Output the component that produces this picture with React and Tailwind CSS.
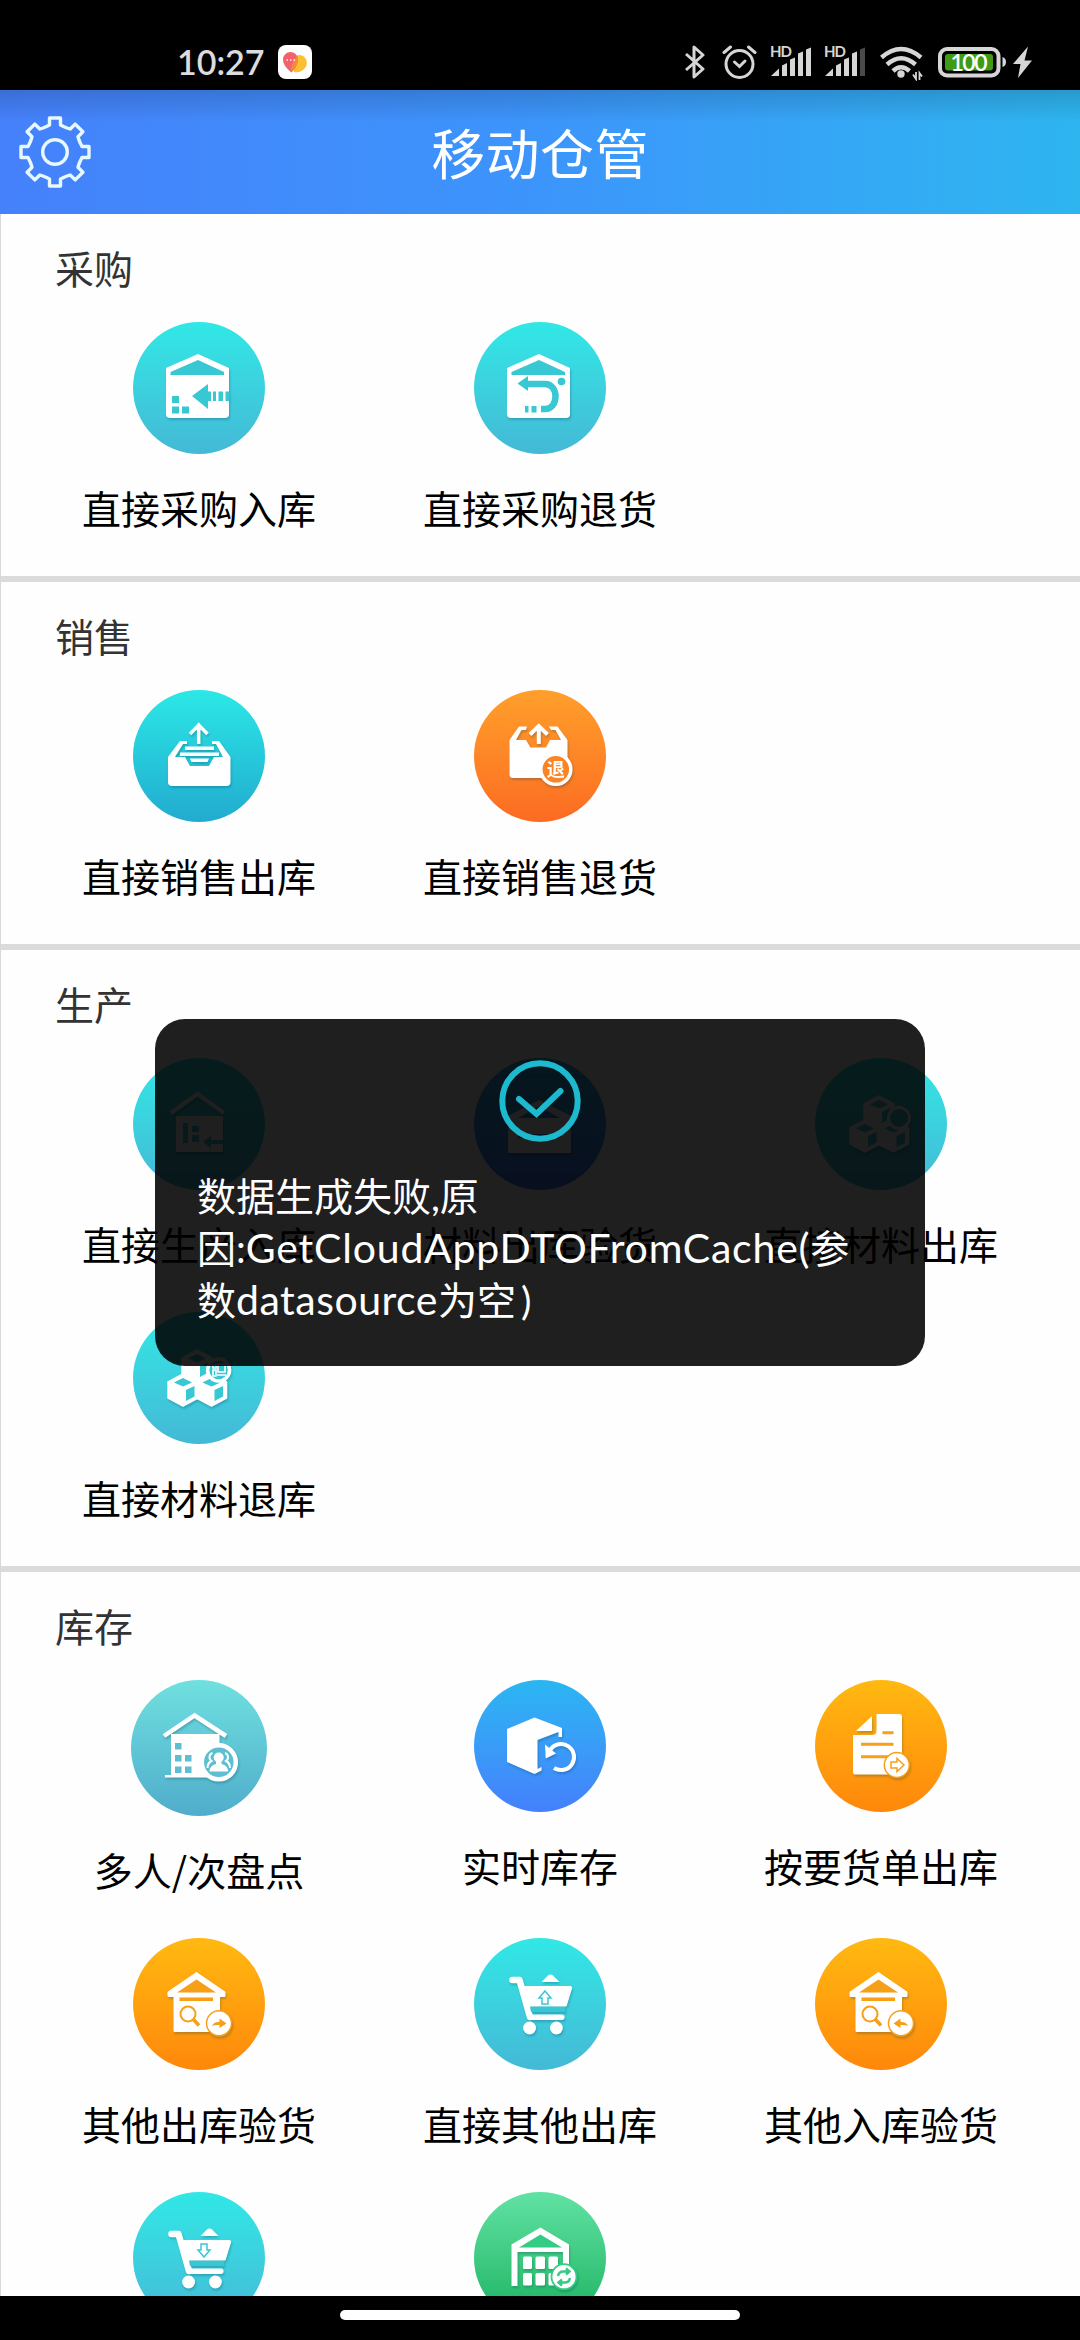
import clsx from "clsx";

const HOUSE = "M65 32 L96 46 V92 Q96 96 92 96 H37 Q33 96 33 92 V46 Z";

function PurchaseIn({ c }) {
  return (
    <>
      <path d={HOUSE} fill="#fff" />
      <path d="M37.5 53 V50 L65 38 L91 50 V53 Z" fill={c} />
      <path d="M59 74 L75 62 V69.5 H78 V79 H75 V87 Z" fill={c} />
      <path d="M80 69.5 h3 v9.5 h-3z M85.5 69.5 h4.5 v9.5 h-4.5z M92.5 69.5 h4 v9.5 h-4z" fill={c} />
      <path d="M39 74 h7 v7 h-7z M39 84.5 h7 v7 h-7z M49 84.5 h7 v7 h-7z" fill={c} />
    </>
  );
}

function PurchaseReturn({ c }) {
  return (
    <>
      <path d={HOUSE} fill="#fff" />
      <path d="M37.5 53 V50 L65 38 L91 50 V53 Z" fill={c} />
      <path d="M43.5 61.5 L54 54 V69 Z" fill={c} />
      <path d="M53 62 H71 C85 62 85 87 71 87 H67" fill="none" stroke={c} strokeWidth="6.5" />
      <path d="M57.5 84 h5 v6.5 h-5z M51 84 h3.5 v6.5 h-3.5z" fill={c} />
      <circle cx="87.5" cy="59.5" r="3.8" fill={c} />
    </>
  );
}

function SaleOut() {
  return (
    <>
      <path
        d="M35 67 L47 51 H54 V54 H50 L42 67 H52 L57 76 H76 L81 67 H90 L83 54 H79 V51 H86 L97.5 67 V92 Q97.5 96 93.5 96 H39 Q35 96 35 92 Z"
        fill="#fff"
      />
      <path d="M52 56.5 H81 V60 H52 Z M47 62.5 H86 V66 H47 Z M57 68.5 H76 L74.5 72 H58.5 Z" fill="#fff" />
      <path d="M65.7 54 V36 M57 44 L65.7 35 L74.5 44" fill="none" stroke="#fff" strokeWidth="3.5" />
      <path d="M65.7 32.5 L71 40 H60.4 Z" fill="#fff" />
    </>
  );
}

function SaleReturn({ c }) {
  return (
    <>
      <path
        d="M35.5 50 L45 36.5 H53 L52 40 H47.5 L42 50 H52 L56.5 57.5 H72 L76 50 H87 L81.5 40 H77 L75 36.5 H83.5 L93.5 50 V88 H39 Q35.5 88 35.5 84.5 Z"
        fill="#fff"
      />
      <path d="M64.8 54 V37 M56 44.5 L64.8 36 L73.5 44.5" fill="none" stroke="#fff" strokeWidth="4" />
      <circle cx="81.8" cy="79.3" r="15" fill={c} stroke="#fff" strokeWidth="3.5" />
      <text
        x="81.8"
        y="86"
        textAnchor="middle"
        fontSize="18"
        fontWeight="700"
        fill="#fff"
        className="font-['Noto_Sans_CJK_SC',sans-serif]"
      >
        退
      </text>
    </>
  );
}

function ProductIn({ c }) {
  return (
    <>
      <path d="M38 55 L64.5 36 L91 55" fill="none" stroke="#fff" strokeWidth="4" />
      <path d="M43 58 H90 V94 H43 Z" fill="#fff" />
      <path d="M50 65 h5 v20 h-5z M59 68 h7 v6 h-7z M59 77 h7 v7 h-7z M70 84 l8 -6 v4 h12 v4 h-12 v4z" fill={c} />
    </>
  );
}

function MaterialCheck({ c }) {
  return (
    <>
      <path d="M65 42 L97 58 V95 H34 V58 Z" fill="#fff" />
      <path d="M44 60 L65 48 L86 60 Z M44 76 H86 V80 H44 Z" fill={c} />
    </>
  );
}

function Cube({ x, y, c }) {
  return (
    <g transform={`translate(${x} ${y})`}>
      <path
        d="M0 8 L15 0 L30 8 V24 L15 32 L0 24 Z"
        fill="#fff"
        stroke="#fff"
        strokeWidth="1.5"
        strokeLinejoin="round"
      />
      <path d="M6 8.5 L15 4 L24 8.5 L15 12.5 Z" fill={c} />
      <path d="M18 16 L26.5 12 V22.5 L18 27 Z" fill={c} />
    </g>
  );
}

function Cubes({ c }) {
  return (
    <>
      <Cube x={49} y={38} c={c} />
      <Cube x={35} y={62} c={c} />
      <Cube x={63.5} y={62} c={c} />
    </>
  );
}

function MaterialOut({ c }) {
  return (
    <>
      <Cubes c={c} />
      <circle cx="84" cy="60" r="10.5" fill={c} stroke="#fff" strokeWidth="3" />
    </>
  );
}

function MaterialReturn({ c }) {
  return (
    <>
      <Cubes c={c} />
      <circle cx="85.6" cy="58" r="11" fill={c} stroke="#fff" strokeWidth="3.5" />
      <path
        d="M80 53 h3 v3 h-3z M80 58 h3 v6 h-3z M85 52 h7 v8 h-7z M84 63 h9"
        fill="none"
        stroke="#fff"
        strokeWidth="1.6"
      />
    </>
  );
}

function MultiCount({ c }) {
  return (
    <>
      <path d="M33 56 L63.6 35.5 L95 56" fill="none" stroke="#fff" strokeWidth="4.5" />
      <path d="M40 54 H88.5 V97.5 H34 V95 H40 Z" fill="#fff" />
      <path
        d="M44 63 h6.5 v6.5 h-6.5z M44 75 h6.5 v6.5 h-6.5z M54 75 h6.5 v6.5 h-6.5z M44 86.5 h6.5 v6.5 h-6.5z M54 86.5 h6.5 v6.5 h-6.5z"
        fill={c}
      />
      <circle cx="87.8" cy="82.3" r="17" fill={c} stroke="#fff" strokeWidth="4.5" />
      <path
        d="M81.5 73 a4.5 4.5 0 0 0 -1 8 q-4 2 -4 7 M94 73 a4.5 4.5 0 0 1 1 8 q4 2 4 7"
        fill="none"
        stroke="#fff"
        strokeWidth="2"
      />
      <circle cx="87.7" cy="77.5" r="5" fill="#fff" />
      <path d="M78.5 91.5 q0 -6 6.5 -7.5 v-3 h5.5 v3 q6.5 1.5 6.5 7.5z" fill="#fff" />
    </>
  );
}

function RealtimeStock() {
  return (
    <>
      <path
        d="M60.6 37.5 L88 48 V57 H84.5 V52 L63.5 60 V89 L67.5 87 V90.5 L60.6 94 L33 82 V49 Z"
        fill="#fff"
      />
      <path d="M76.5 69.5 A13 13 0 1 1 80 88" fill="none" stroke="#fff" strokeWidth="4" />
      <path d="M71 64.5 L71.7 78.5 L82 73.5 Z" fill="#fff" />
    </>
  );
}

function RequestDoc({ c }) {
  return (
    <>
      <path d="M41 51 L57 36 V51 Z" fill="#fff" />
      <path
        d="M61.5 34 H84 Q87 34 87 37 V94.5 H40 Q38 94.5 38 92.5 V55 H57 Q61.5 55 61.5 50.5 Z"
        fill="#fff"
      />
      <path d="M67.5 52.7 H78.5 M46 64.3 H78.5 M46 76.7 H75" stroke={c} strokeWidth="3" />
      <circle cx="81.8" cy="85" r="12.5" fill="#fff" stroke={c} strokeWidth="1.5" />
      <path d="M76 82 H82 V78.5 L89 85 L82 91.5 V88 H76 Z" fill="none" stroke={c} strokeWidth="1.5" />
    </>
  );
}

function CheckHouse({ c, back }) {
  return (
    <>
      <path
        d="M63.5 34.5 L92 54 V58.5 H86.5 V93.5 H41 V58.5 H35 V54 Z"
        fill="#fff"
        stroke="#fff"
        strokeLinejoin="round"
      />
      <path d="M44 54.5 L63.5 41.5 L83 54.5 Z" fill={c} />
      <path d="M46.5 59.5 H80 V63 H46.5 Z" fill={c} />
      <circle cx="55" cy="76" r="7.5" fill="none" stroke={c} strokeWidth="2" />
      <path d="M60 81 L66 87.5" stroke={c} strokeWidth="3.5" />
      <circle cx="86" cy="85.3" r="12.5" fill="#fff" stroke={c} strokeWidth="1.5" />
      <path
        d="M79 88 Q81 83.5 86.5 84 V80.5 L93.5 85.5 L86.5 90 V87 Q82 86.5 79 88 Z"
        fill={c}
        transform={back ? "translate(172 0) scale(-1 1)" : undefined}
      />
    </>
  );
}

function Cart({ c, down }) {
  return (
    <>
      <path
        d="M38.5 42 H45.5 L56 79"
        fill="none"
        stroke="#fff"
        strokeWidth="6.5"
        strokeLinecap="round"
        strokeLinejoin="round"
      />
      <path d="M48 48 H96 Q98.5 48 98 50.5 L92.5 68.5 H54 Z" fill="#fff" />
      <path d="M53 76.5 H88 Q90.5 76.5 90.5 79.3 Q90.5 82 88 82 H55 Z" fill="#fff" />
      <path d="M56 69 H91 V74 H57 Z" fill={c} />
      <path d="M67.5 44 L74 37.5 Q76.5 35.5 79 37.5 L85.5 44 Z" fill="#fff" />
      <circle cx="55.6" cy="90" r="6.4" fill="#fff" />
      <circle cx="82.4" cy="90" r="6.4" fill="#fff" />
      <path
        d="M71 53 L77 60 H74 V66 H68 V60 H65 Z"
        fill="none"
        stroke={c}
        strokeWidth="1.5"
        transform={down ? "translate(0 118) scale(1 -1)" : undefined}
      />
    </>
  );
}

function Warehouse({ c }) {
  return (
    <>
      <path d="M66.4 35.5 L95 52.5 V94 H89 V60 H43.5 V94 H37.5 V52.5 Z" fill="#fff" />
      <path d="M45 55.5 L66.4 42.5 L88 55.5 Z" fill={c} />
      <g fill="#fff">
        <rect x="49" y="64.5" width="9" height="12.5" rx="1.5" />
        <rect x="61.5" y="64.5" width="9.5" height="12.5" rx="1.5" />
        <rect x="74.5" y="64.5" width="9.5" height="12.5" rx="1.5" />
        <rect x="49" y="81" width="9" height="12.5" rx="1.5" />
        <rect x="61.5" y="81" width="9.5" height="12.5" rx="1.5" />
        <rect x="74.5" y="81" width="9.5" height="12.5" rx="1.5" />
      </g>
      <circle cx="90" cy="84.7" r="12.5" fill="#fff" stroke={c} strokeWidth="1.8" />
      <path
        d="M84 84 q1 -5 6 -4.500 h5 M92 76.5 l3.5 3 l-3.5 3 M96 86 q-1 5 -6 4.500 h-5 M88 87.5 l-3.5 3 l3.5 3"
        fill="none"
        stroke={c}
        strokeWidth="2.4"
      />
    </>
  );
}

const TEAL = { bg: "from-[#30e8e6] to-[#43b9d6]", c: "#38c8d4" };
const CYAN = { bg: "from-[#2ce8e6] to-[#22abcf]", c: "#2bc3d6" };
const ORANGE = { bg: "from-[#ff9f2b] to-[#fb6b22]", c: "#fb8424" };
const BLUE = { bg: "from-[#2ab6f2] to-[#4480fc]", c: "#3a97f6" };
const PALE = { bg: "from-[#70e0df] to-[#50adcb]", c: "#5dbfcf" };
const AMBER = { bg: "from-[#ffb911] to-[#fe870b]", c: "#f79f17" };
const GREEN = { bg: "from-[#60e2a4] to-[#0cb25f]", c: "#34cc84" };

const sections = [
  {
    title: "采购",
    items: [
      { label: "直接采购入库", color: TEAL, icon: PurchaseIn },
      { label: "直接采购退货", color: TEAL, icon: PurchaseReturn },
    ],
  },
  {
    title: "销售",
    items: [
      { label: "直接销售出库", color: CYAN, icon: SaleOut },
      { label: "直接销售退货", color: ORANGE, icon: SaleReturn },
    ],
  },
  {
    title: "生产",
    items: [
      { label: "直接生产入库", color: TEAL, icon: ProductIn },
      { label: "材料出库验货", color: BLUE, icon: MaterialCheck },
      { label: "直接材料出库", color: TEAL, icon: MaterialOut },
      { label: "直接材料退库", color: TEAL, icon: MaterialReturn },
    ],
  },
  {
    title: "库存",
    items: [
      { label: "多人/次盘点", color: PALE, icon: MultiCount, large: true },
      { label: "实时库存", color: BLUE, icon: RealtimeStock },
      { label: "按要货单出库", color: AMBER, icon: RequestDoc },
      { label: "其他出库验货", color: AMBER, icon: CheckHouse },
      { label: "直接其他出库", color: TEAL, icon: Cart },
      { label: "其他入库验货", color: AMBER, icon: CheckHouse, iconProps: { back: true } },
      { color: TEAL, icon: Cart, iconProps: { down: true } },
      { color: GREEN, icon: Warehouse },
    ],
  },
];

function MenuItem({ item }) {
  const Icon = item.icon;
  const size = item.large ? 136 : 132;
  return (
    <div className="flex flex-col items-center pb-[46px]">
      <div
        className={clsx(
          "rounded-full bg-linear-to-b",
          item.large ? "size-[136px]" : "size-[132px]",
          item.color.bg
        )}
      >
        <svg
          viewBox={`0 0 ${size} ${size}`}
          className="size-full drop-shadow-[1px_2px_1px_rgba(0,60,80,0.25)]"
        >
          <Icon c={item.color.c} {...item.iconProps} />
        </svg>
      </div>
      {item.label && (
        <span className="mt-[33px] mb-[3px] h-10 text-[39px] leading-10 whitespace-nowrap text-black">
          {item.label}
        </span>
      )}
    </div>
  );
}

function Section({ section }) {
  return (
    <section className="border-b-[6px] border-[#dadbdc]">
      <h2 className="h-[108px] pl-[54px] text-[39px] leading-[106px] text-[#333]">{section.title}</h2>
      <div className="grid grid-cols-3 items-start pr-[28.5px] pl-[27.5px]">
        {section.items.map((item, i) => (
          <MenuItem key={i} item={item} />
        ))}
      </div>
    </section>
  );
}

function Signal({ weak }) {
  return (
    <svg viewBox="0 0 42 34" className="h-[34px] w-[42px] overflow-visible">
      <text
        x="0"
        y="12"
        fontSize="15"
        fontWeight="700"
        textLength="22"
        fill="#d6d6d6"
        className="font-[Lato,sans-serif]"
      >
        HD
      </text>
      <g fill="#d6d6d6">
        <path d="M1 31 L9 23.5 V31 Z" />
        <path d="M12 20.5 l5 -2.5 v13 h-5z M20 14.5 l5 -2 v18.5 h-5z M28 8.5 l5 -2 v24.5 h-5z" />
        <path d="M36 4.5 l5 -2 v28.5 h-5z" fill={weak ? "#4a4a4a" : "#d6d6d6"} />
      </g>
    </svg>
  );
}

function StatusBar() {
  return (
    <div className="flex h-[90px] items-start bg-black pt-[45px] pr-[47px] pl-[177px]">
      <span className="w-[101px] font-[Lato,sans-serif] text-[34px] leading-[34px] font-semibold text-[#dcdcdc]">
        10:27
      </span>
      <svg viewBox="0 0 34 34" className="size-[34px]">
        <rect width="34" height="34" rx="8" fill="#fff" />
        <path d="M22 10 a8 8 0 0 1 4 14 q-4 4 -10 3 L14 14 q3 -4 8 -4z" fill="#f9c12f" />
        <path d="M12.5 7 a7.5 7.5 0 0 1 7.5 7.5 q0 6 -6.5 13 Q5 21 5 14.5 A7.5 7.5 0 0 1 12.5 7z" fill="#f4616b" />
        <path d="M19 11 q2 4 0 8 q-2 5 -5.5 8.5 q-2 -8 5.5 -16.5z" fill="#f58a3a" />
        <path d="M8.5 15 h1.5 M12 15 h1.5 M15.5 15 h1.5" stroke="#fff" strokeWidth="1.3" />
      </svg>
      <div className="ml-auto flex items-start">
        <svg viewBox="0 0 22 34" className="mr-[16px] h-[34px] w-[22px]">
          <path
            d="M2 9 L19 24 L10 32 V2 L19 10 L2 25"
            fill="none"
            stroke="#d6d6d6"
            strokeWidth="3"
            strokeLinejoin="round"
          />
        </svg>
        <svg viewBox="0 0 35 34" className="mr-[13px] h-[34px] w-[35px]">
          <g fill="none" stroke="#d6d6d6" strokeWidth="3" strokeLinecap="round">
            <circle cx="17.5" cy="19" r="13.5" />
            <path d="M2 7.5 L8.5 2 M33 7.5 L26.5 2" />
            <path d="M12.5 17 L17.5 21.5 L23 16" />
          </g>
        </svg>
        <div className="mr-[12px]">
          <Signal />
        </div>
        <div className="mr-[14px]">
          <Signal weak />
        </div>
        <svg viewBox="0 0 44 36" className="mr-[14px] h-[36px] w-[44px]">
          <g fill="none" stroke="#d6d6d6" strokeWidth="4.5">
            <path d="M1.5 12.5 Q21 -4.5 41 12.5" />
            <path d="M7 19.5 Q21 7 35.5 19.5" />
            <path d="M13 26 Q21 18.5 29.5 26" />
          </g>
          <circle cx="21" cy="29" r="3.7" fill="#d6d6d6" />
          <path d="M33 29.5 L36 34 V27 M39.5 35 V28 L42 31.5" fill="none" stroke="#d6d6d6" strokeWidth="1.8" />
        </svg>
        <svg viewBox="0 0 95 34" className="h-[34px] w-[95px]">
          <rect x="2" y="4" width="58.5" height="26.5" rx="7" fill="none" stroke="#d6d6d6" strokeWidth="4" />
          <rect x="7" y="9" width="48" height="16.5" rx="3" fill="#3f9b14" />
          <text
            x="31"
            y="25.5"
            textAnchor="middle"
            fontSize="23"
            fontWeight="600"
            textLength="37"
            fill="#fff"
            className="font-[Lato,sans-serif]"
          >
            100
          </text>
          <path d="M64.5 12 q3.5 1 3.5 5 q0 4 -3.5 5z" fill="#d6d6d6" />
          <path d="M90 1.5 L75 19 H82.5 L80 33 L94 15.5 H86.5 Z" fill="#d6d6d6" />
        </svg>
      </div>
    </div>
  );
}

// outline of an eight toothed gear round (36, 36)
function gearPath() {
  const pts = [];
  for (let i = 0; i < 8; i++) {
    const a = (i * Math.PI) / 4;
    const corners = [
      [-8.5, -25.5],
      [-5.5, -27],
      [-5.5, -34],
      [5.5, -34],
      [5.5, -27],
      [8.5, -25.5],
    ];
    corners.forEach(([x, y]) => {
      const px = 36 + x * Math.cos(a) - y * Math.sin(a);
      const py = 36 + x * Math.sin(a) + y * Math.cos(a);
      pts.push(`${px.toFixed(1)} ${py.toFixed(1)}`);
    });
  }
  return `M${pts.join(" L")} Z`;
}

function Header() {
  return (
    <header className="relative flex h-[124px] items-center justify-center bg-linear-to-r from-[#4581fb] via-[#3c95fb] to-[#2eb5f0]">
      <div className="absolute inset-x-0 top-0 h-8 bg-linear-to-b from-black/15 to-transparent" />
      <svg viewBox="0 0 72 72" className="absolute top-[26px] left-[19px] size-[72px]">
        <path d={gearPath()} fill="none" stroke="#e8f8ff" strokeWidth="3.4" strokeLinejoin="round" />
        <circle cx="36" cy="36" r="12.3" fill="none" stroke="#e8f8ff" strokeWidth="3.4" />
      </svg>
      <h1 className="text-[54px] leading-none tracking-[0.4px] text-white">移动仓管</h1>
    </header>
  );
}

function Toast() {
  return (
    <div className="absolute top-[1019px] left-[155px] flex h-[347px] w-[770px] flex-col items-center rounded-[30px] bg-black/88 pt-[41px]">
      <svg viewBox="0 0 82 82" className="size-[82px]">
        <g fill="none" stroke="#1db9cf" strokeWidth="6">
          <circle cx="41" cy="41" r="37.7" />
          <path d="M20 39 L37.5 54 L61.5 31" strokeLinecap="round" />
        </g>
      </svg>
      <p className="mt-[28px] w-full pl-[42px] font-[Lato,'Noto_Sans_CJK_SC',sans-serif] text-[39px] leading-[52px] whitespace-nowrap text-white">
        数据生成失败,原
        <br />
        因:<span className="text-[41px] leading-none tracking-[0.8px]">GetCloudAppDTOFromCache(</span>参
        <br />
        数<span className="text-[41px] leading-none tracking-[0.5px]">datasource</span>为空
        <span className="pl-[5px]">)</span>
      </p>
    </div>
  );
}

export default function App() {
  return (
    <div className="relative flex h-[2340px] w-[1080px] flex-col overflow-hidden bg-black font-['Noto_Sans_CJK_SC',sans-serif]">
      <StatusBar />
      <Header />
      <main className="min-h-0 flex-1 overflow-hidden border-l border-[#d8d8d8] bg-[#fefefe]">
        {sections.map((section) => (
          <Section key={section.title} section={section} />
        ))}
      </main>
      <div className="flex h-11 shrink-0 justify-center bg-black pt-[14px]">
        <div className="h-[10px] w-[400px] rounded-full bg-white" />
      </div>
      <Toast />
    </div>
  );
}
